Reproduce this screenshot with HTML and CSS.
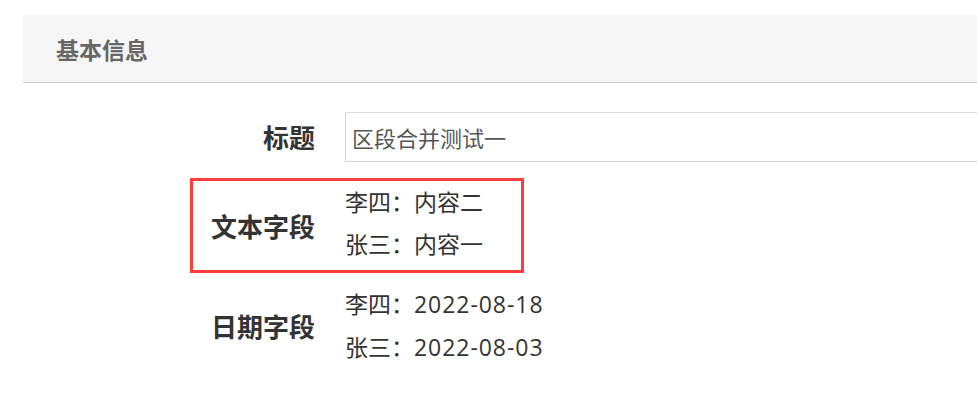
FILE: index.html
```html
<!DOCTYPE html>
<html lang="zh-CN">
<head>
<meta charset="utf-8">
<title>基本信息</title>
<link rel="stylesheet" href="styles.css">
</head>
<body>
<div class="panel">
  <div class="panel-header">基本信息</div>
  <div class="panel-body">
    <div class="item item-input">
      <div class="label">标题</div>
      <div class="content">
        <div class="input">区段合并测试一</div>
      </div>
    </div>
    <div class="item item-highlight">
      <div class="label">文本字段</div>
      <div class="content">
        <div class="line">李四：内容二</div>
        <div class="line">张三：内容一</div>
      </div>
    </div>
    <div class="item item-date">
      <div class="label">日期字段</div>
      <div class="content">
        <div class="line">李四：<span class="num">2022-08-18</span></div>
        <div class="line">张三：<span class="num">2022-08-03</span></div>
      </div>
    </div>
  </div>
</div>
</body>
</html>
```

FILE: styles.css
```css
html, body {
  margin: 0;
  padding: 0;
  background: #ffffff;
  overflow: hidden;
}

body {
  font-family: "Open Sans", "Noto Sans CJK SC", sans-serif;
  color: #333333;
}

.panel {
  margin: 15px 0 0 23px;
}

.panel-header {
  height: 67px;
  background: #f6f6f6;
  border-bottom: 1px solid #cccccc;
  padding-left: 33px;
  display: flex;
  align-items: center;
  font-size: 23px;
  font-weight: 700;
  color: #666666;
}

.panel-body {
  padding: 26px 0 0 167px;
  display: flex;
  flex-direction: column;
  align-items: flex-start;
}

.item {
  display: flex;
  align-items: center;
  border: 3px solid transparent;
}

.label {
  width: 122px;
  text-align: right;
  font-size: 26px;
  font-weight: 700;
  color: #333333;
  flex-shrink: 0;
}

.content {
  margin-left: 30px;
}

.item-input {
  align-self: stretch;
  border-right-width: 0;
}

.item-input .content {
  flex: 1;
  min-width: 0;
}

.input {
  height: 48px;
  border: 1px solid #d6d6d6;
  border-top-color: #dcdde8;
  border-right: 0;
  padding-left: 6px;
  display: flex;
  align-items: center;
  font-size: 22px;
  color: #555555;
}

.item-highlight {
  margin-top: 13px;
  border-color: #ff3b3b;
  padding-right: 38px;
}

.item-highlight .content {
  padding-bottom: 5px;
}

.item-highlight .line {
  line-height: 42px;
}

.item-date {
  margin-top: 7px;
}

.item-date .line {
  line-height: 43px;
}

.line {
  font-size: 23px;
  color: #333333;
  white-space: nowrap;
}

.num {
  letter-spacing: 0.95px;
}
```
